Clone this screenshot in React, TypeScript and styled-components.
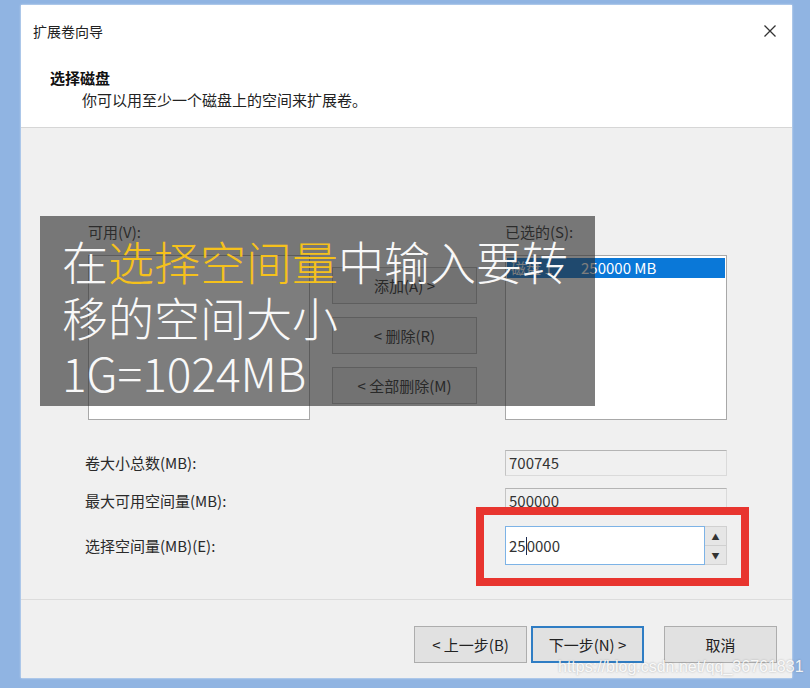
import React from "react";
import styled, { createGlobalStyle } from "styled-components";

const GlobalStyle = createGlobalStyle`
  html, body {
    margin: 0;
    padding: 0;
    background: #90b4e2;
  }
  * {
    box-sizing: border-box;
  }
`;

const uiFont = `"Noto Sans CJK SC", "Noto Sans", sans-serif`;
const captionFont = `"Noto Sans CJK SC Light", "Noto Sans CJK SC DemiLight", "Noto Sans CJK SC", "Noto Sans", sans-serif`;

const Page = styled.div`
  position: relative;
  width: 810px;
  height: 688px;
  padding: 5px 18px 10px 21px;
  background: #90b4e2;
  font-family: ${uiFont};
  font-size: 15px;
  color: #2a2a2a;
`;

const Dialog = styled.div`
  display: flex;
  flex-direction: column;
  width: 771px;
  height: 673px;
  background: #f0f0f0;
  box-shadow: 0 0 2px rgba(255, 255, 255, 0.8);
`;

const Header = styled.div`
  display: flex;
  flex-direction: column;
  height: 123px;
  padding: 16px 0 0 12px;
  background: #ffffff;
  border-bottom: 1px solid #d6d6d6;
`;

const TitleRow = styled.div`
  display: flex;
  align-items: center;
  justify-content: space-between;
  height: 20px;
  padding-right: 12px;
  font-size: 14px;
  color: #222;
`;

const CloseButton = styled.button`
  display: flex;
  align-items: center;
  justify-content: center;
  width: 20px;
  height: 20px;
  padding: 0;
  border: none;
  background: transparent;
`;

const StepTitle = styled.div`
  margin: 27px 0 0 17px;
  height: 20px;
  line-height: 20px;
  font-weight: 700;
  font-size: 15px;
  color: #111;
`;

const StepText = styled.div`
  margin: 2px 0 0 49px;
  height: 20px;
  line-height: 20px;
  font-size: 15px;
  color: #222;
`;

const Body = styled.div`
  position: relative;
  height: 472px;
  padding: 94px 0 0 64px;
  border-bottom: 1px solid #dcdcdc;
`;

const Transfer = styled.div`
  display: grid;
  grid-template-columns: 222px 195px 222px;
  grid-template-rows: 20px 165px;
  row-gap: 13px;
  margin-left: 3px;
`;

const Label = styled.div`
  line-height: 20px;
  white-space: nowrap;
`;

const ListBox = styled.div`
  grid-row: 2;
  background: #ffffff;
  border: 1px solid #a8a8a8;
  padding: 2px 1px;
`;

const ListRow = styled.div<{ $selected?: boolean }>`
  display: flex;
  height: 20px;
  line-height: 20px;
  padding-left: 4px;
  background: ${(p) => (p.$selected ? "#0a78d8" : "transparent")};
  color: ${(p) => (p.$selected ? "#ffffff" : "#222")};
`;

const ListCell = styled.span<{ $width?: number }>`
  width: ${(p) => (p.$width ? `${p.$width}px` : "auto")};
  white-space: nowrap;
`;

const MoveButtons = styled.div`
  grid-row: 2;
  display: flex;
  flex-direction: column;
  gap: 13px;
  padding: 12px 0 0 22px;
`;

const Button = styled.button<{ $primary?: boolean; $width?: number }>`
  width: ${(p) => (p.$width ? `${p.$width}px` : "113px")};
  height: 37px;
  padding: 0;
  font-family: ${uiFont};
  font-size: 15px;
  color: ${(p) => (p.disabled ? "#8a8a8a" : "#222")};
  background: #e1e1e1;
  border: ${(p) => (p.$primary ? "2px solid #2f7dc4" : "1px solid #adadad")};
`;

const Fields = styled.div`
  display: grid;
  grid-template-columns: 420px 222px;
  grid-template-rows: 26px 26px 39px;
  row-gap: 12px;
  align-items: center;
  margin-top: 30px;
`;

const ReadOnlyField = styled.div`
  height: 26px;
  padding-left: 3px;
  line-height: 24px;
  background: #f0f0f0;
  border: 1px solid #dadada;
  border-top-color: #b4b4b4;
  border-left-color: #c4c4c4;
  color: #333;
`;

const SpinWrap = styled.div`
  position: relative;
  display: flex;
  height: 39px;
`;

const SpinInput = styled.div`
  display: flex;
  align-items: center;
  width: 200px;
  height: 100%;
  padding-left: 3px;
  background: #ffffff;
  border: 1px solid #7db3e6;
  color: #333;
`;

const Caret = styled.span`
  display: inline-block;
  width: 1px;
  height: 18px;
  background: #1a2a50;
`;

const SpinButtons = styled.div`
  display: flex;
  flex-direction: column;
  width: 22px;
  height: 100%;
  border: 1px solid #d0d0d0;
  border-left: none;
`;

const SpinArrow = styled.div`
  flex: 1;
  display: flex;
  align-items: center;
  justify-content: center;
  background: #e6e6e6;
  font-size: 8px;
  color: #333;
  & + & {
    border-top: 1px solid #d0d0d0;
  }
`;

const Highlight = styled.div`
  position: absolute;
  left: -29px;
  top: -19px;
  right: -22px;
  bottom: -21px;
  border: 8px solid #e8352f;
  pointer-events: none;
`;

const Caption = styled.div`
  position: absolute;
  left: 19px;
  top: 88px;
  width: 555px;
  height: 190px;
  padding: 16px 0 0 22px;
  background: rgba(45, 45, 45, 0.62);
  font-family: ${captionFont};
  font-weight: 300;
  font-size: 46px;
  line-height: 56px;
  color: #f8f8f8;
`;

const CaptionLine = styled.div`
  white-space: nowrap;
`;

const Accent = styled.span`
  color: #f5c11c;
`;

const Footer = styled.div`
  flex: 1;
  display: flex;
  justify-content: flex-end;
  align-items: flex-start;
  gap: 4px;
  padding: 26px 15px 0 0;
`;

const CancelButton = styled(Button)`
  margin-left: 16px;
`;

const Watermark = styled.div`
  position: absolute;
  left: 558px;
  top: 658px;
  font-family: "Liberation Sans", Arial, sans-serif;
  font-size: 16px;
  color: rgba(255, 255, 255, 0.9);
  text-shadow: 0 0 2px rgba(90, 90, 90, 0.45);
  white-space: nowrap;
`;

const CloseIcon = () => (
  <svg width="14" height="14" viewBox="0 0 14 14">
    <path d="M1.5 1.5 L12.5 12.5 M12.5 1.5 L1.5 12.5" stroke="#333" strokeWidth="1.3" fill="none" />
  </svg>
);

const App: React.FC = () => {
  return (
    <Page>
      <GlobalStyle />
      <Dialog>
        <Header>
          <TitleRow>
            <span>扩展卷向导</span>
            <CloseButton aria-label="关闭">
              <CloseIcon />
            </CloseButton>
          </TitleRow>
          <StepTitle>选择磁盘</StepTitle>
          <StepText>你可以用至少一个磁盘上的空间来扩展卷。</StepText>
        </Header>

        <Body>
          <Transfer>
            <Label>可用(V):</Label>
            <div />
            <Label>已选的(S):</Label>
            <ListBox />
            <MoveButtons>
              <Button $width={145}>添加(A) &gt;</Button>
              <Button $width={145}>&lt; 删除(R)</Button>
              <Button $width={145}>&lt; 全部删除(M)</Button>
            </MoveButtons>
            <ListBox>
              <ListRow $selected>
                <ListCell $width={70}>磁盘 1</ListCell>
                <ListCell>250000 MB</ListCell>
              </ListRow>
            </ListBox>
          </Transfer>

          <Fields>
            <Label>卷大小总数(MB):</Label>
            <ReadOnlyField>700745</ReadOnlyField>
            <Label>最大可用空间量(MB):</Label>
            <ReadOnlyField>500000</ReadOnlyField>
            <Label>选择空间量(MB)(E):</Label>
            <SpinWrap>
              <SpinInput>
                25
                <Caret />
                0000
              </SpinInput>
              <SpinButtons>
                <SpinArrow>▲</SpinArrow>
                <SpinArrow>▼</SpinArrow>
              </SpinButtons>
              <Highlight />
            </SpinWrap>
          </Fields>

          <Caption>
            <CaptionLine>
              在<Accent>选择空间量</Accent>中输入要转
            </CaptionLine>
            <CaptionLine>移的空间大小</CaptionLine>
            <CaptionLine>1G=1024MB</CaptionLine>
          </Caption>
        </Body>

        <Footer>
          <Button>&lt; 上一步(B)</Button>
          <Button $primary>下一步(N) &gt;</Button>
          <CancelButton>取消</CancelButton>
        </Footer>
      </Dialog>
      <Watermark>https://blog.csdn.net/qq_36761831</Watermark>
    </Page>
  );
};

export default App;
